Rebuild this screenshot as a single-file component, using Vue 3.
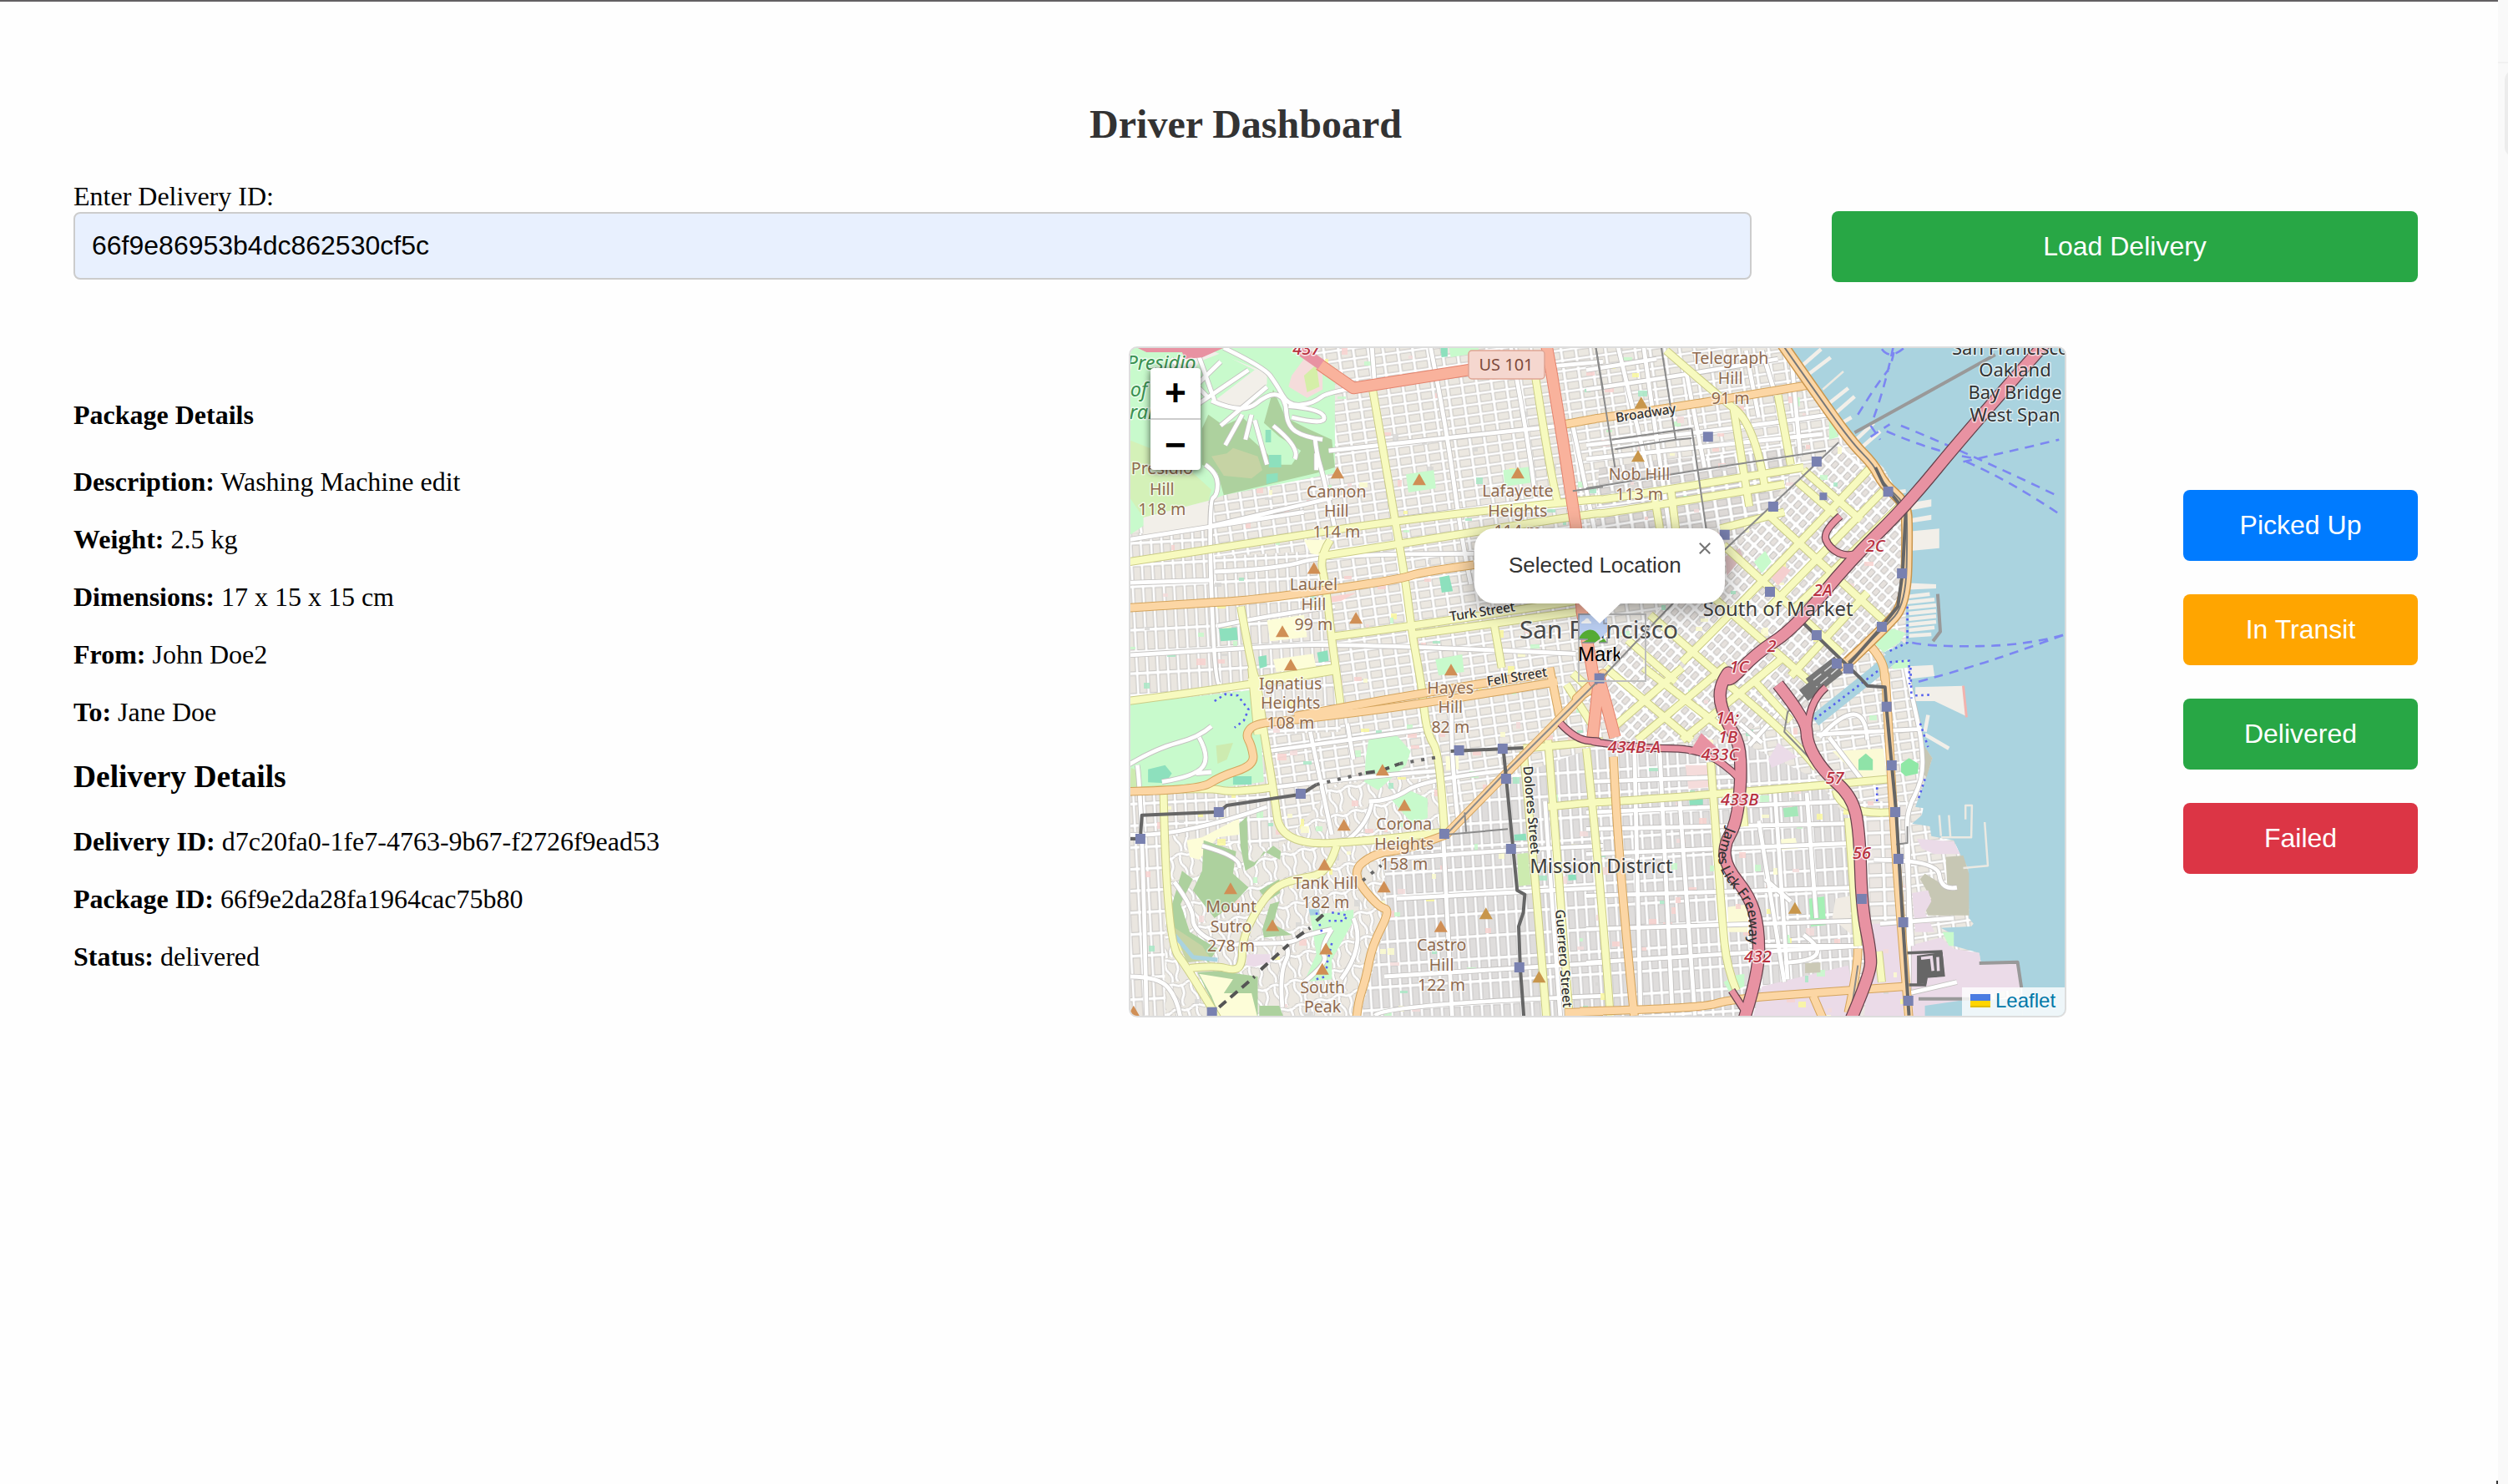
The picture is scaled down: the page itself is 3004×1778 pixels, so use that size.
<script setup>
import { ref } from 'vue'

const deliveryId = ref('66f9e86953b4dc862530cf5c')
const packageRows = [
  ['Description:', 'Washing Machine edit'],
  ['Weight:', '2.5 kg'],
  ['Dimensions:', '17 x 15 x 15 cm'],
  ['From:', 'John Doe2'],
  ['To:', 'Jane Doe']
]
const deliveryRows = [
  ['Delivery ID:', 'd7c20fa0-1fe7-4763-9b67-f2726f9ead53'],
  ['Package ID:', '66f9e2da28fa1964cac75b80'],
  ['Status:', 'delivered']
]
const actions = [
  ['Picked Up', 'blue'],
  ['In Transit', 'orange'],
  ['Delivered', 'green'],
  ['Failed', 'red']
]

// The map is digitised in four sheets (a b / c d); each has an origin and a scale.
const sheets = {
  a: [-14, -17, 2.7034, 3],
  b: [546, -17, 2.6133, 3],
  c: [-14, 383, 2.7034, 3],
  d: [546, 383, 2.6133, 3]
}
const at = (s, x, y) => {
  const [ox, oy, sx, sy] = sheets[s]
  return [+(ox + x / sx).toFixed(1), +(oy + y / sy).toFixed(1)]
}
// "a 10,20 30,40 b 5,5" -> svg path data; "/" begins a new line
const path = (text) => {
  let s = 'a'
  let cmd = 'M'
  return text.trim().split(/\s+/).map((t) => {
    if (sheets[t]) { s = t; return '' }
    if (t === '/') { cmd = 'M'; return '' }
    const [x, y] = t.split(',').map(Number)
    const out = cmd + at(s, x, y).join(' ')
    cmd = 'L'
    return out
  }).join('')
}
// Same input, with corners rounded through the midpoints
const curve = (text) => {
  let s = 'a'
  return text.split('/').map((part) => {
    const p = []
    part.trim().split(/\s+/).forEach((t) => {
      if (sheets[t]) s = t
      else p.push(at(s, ...t.split(',').map(Number)))
    })
    if (p.length < 3) return 'M' + p.map((q) => q.join(' ')).join('L')
    let d = `M${p[0].join(' ')}`
    for (let i = 1; i < p.length - 1; i++) {
      const e = i === p.length - 2 ? p[i + 1] : [(p[i][0] + p[i + 1][0]) / 2, (p[i][1] + p[i + 1][1]) / 2]
      d += `Q${p[i].join(' ')} ${e.join(' ')}`
    }
    return d
  }).join('')
}

const zones = [
  ['url(#gRich)', 'a 30,720 300,700 310,800 650,780 700,1250 c 720,230 480,240 500,430 520,650 150,700 150,1260 30,1260'],
  ['url(#gHill)', 'c 150,600 520,650 700,420 780,400 1040,400 1050,600 850,700 860,900 780,1260 150,1260'],
  ['url(#gMis)', 'c 1050,590 1250,400 1560,280 1568,1260 780,1260 870,900 860,700'],
  ['url(#gMis)', 'd -10,290 490,270 720,400 830,560 850,1250 -10,1260'],
  ['url(#gDog)', 'd 850,480 1000,480 1020,1250 850,1250'],
  ['url(#gSoma)', 'a 1480,1260 b 30,1260 60,1150 430,800 790,390 960,590 1005,700 990,970 780,1200 720,1260 d 720,60 700,200 620,180 400,260 100,260 -10,100 c 1500,60'],
  ['url(#gFin)', 'b 40,480 690,400 560,660 430,780 430,700 30,700'],
  ['#ebdbe8', 'd 550,1145 820,1070 850,1260 520,1260'],
  ['#ebdbe8', 'd 890,920 1000,920 1020,1260 870,1260'],
  ['#ebdbe8', 'd 600,270 660,320 580,360 570,330'],
  ['#fbfad6', 'd 770,300 930,290 940,395 860,400'],
  ['#fbfad6', 'd 443,860 505,850 505,950 445,950'],
  ['#f5dcdb', 'd 310,350 380,350 385,430 320,435']
]
const coast = 'b 632,40 700,170 760,270 830,360 870,420 930,480 960,540 1000,590 1015,680 1012,780 1005,900 1000,970 1000,1110 930,1145 960,1180 1010,1170 1015,1260 d 1010,0 1020,120 1045,200 1055,280 1083,325 1062,400 1030,500 1055,505 1050,530 1020,560 1075,570 1080,605 1150,620 1170,670 1195,720 1198,900 1212,920 1205,930 1110,935 1150,960 1150,1000 1230,1025 1235,1060 1350,1060 1365,1150 1365,1260 1520,1260 b 1520,40'
const areas = [
  ['#c8facc', 'a 30,50 560,50 700,120 700,500 340,580 290,600 80,690 40,720 30,720'],
  ['#add19e', 'a 290,290 340,330 400,300 460,360 500,200 540,300 610,340 690,380 700,480 640,500 340,580 320,500 270,470 270,340'],
  ['#c8facc', 'a 440,290 520,370 590,420 560,470 510,470 480,430 420,370'],
  ['#c6d3a4', 'a 300,440 350,430 370,410 450,440 465,490 430,520 340,510'],
  ['#d4f1b8', 'a 30,380 100,410 230,490 300,560 290,600 80,660 30,580'],
  ['#f5dcdb', 'a 560,150 600,90 660,130 660,200 610,230 550,190'],
  ['#d5efa8', 'a 600,150 640,110 650,190 610,210'],
  ['#f2efe9', 'a 170,90 300,60 480,140 480,180 400,280 300,230 200,240'],
  ['#c8facc', 'a 330,70 440,130 310,240 200,230 260,100'],
  ['#8de0bd', 'a 475,345 493,345 493,390 475,390'],
  ['#8de0bd', 'a 486,435 526,435 526,480 486,480'],
  ['#8de0bd', 'a 478,505 515,500 515,530 478,540'],
  ['#f2efe9', 'a 80,660 290,600 290,700 80,730'],
  ['#c8facc', 'a 930,505 1020,490 1027,555 938,570'],
  ['#c8facc', 'a 1245,490 1330,478 1337,535 1250,548'],
  ['#8de0bd', 'a 325,1060 382,1055 386,1100 330,1105'],
  ['#8de0bd', 'a 1038,875 1070,868 1082,925 1046,930'],
  ['#fdfdd8', 'a 480,1030 600,1010 610,1090 490,1105'],
  ['#fdfdd8', 'a 500,1170 630,1150 640,1200 510,1215'],
  ['#fdfdd8', 'a 600,740 685,740 650,795 622,790'],
  ['#8de0bd', 'a 452,1160 478,1155 480,1195 456,1203'],
  ['#8de0bd', 'a 642,1145 676,1138 680,1175 648,1182'],
  ['#c8facc', 'a 1025,1170 1112,1152 1118,1215 1036,1228'],
  ['#8de0bd', 'a 1042,50 1065,50 1065,82 1045,84'],
  ['#c8facc', 'a 1070,50 1165,50 1165,68 1075,84'],
  ['#f9d3d0', 'a 682,945 770,930 720,960 684,966'],
  ['#c8facc', 'c 30,130 435,80 460,240 470,410 340,430 50,445 30,440'],
  ['#cdebb0', 'c 315,280 370,270 350,330 320,345'],
  ['#cdebb0', 'c 40,360 60,370 60,430 36,430'],
  ['#8de0bd', 'c 95,365 150,350 172,380 150,415 95,412'],
  ['#8de0bd', 'c 370,390 430,390 430,420 370,420'],
  ['#c8facc', 'c 810,255 900,243 945,300 930,350 840,440 795,410 800,320'],
  ['#c8facc', 'c 880,470 930,435 1000,470 1000,540 950,560'],
  ['#fdfdd8', 'c 220,620 270,610 390,540 390,600 320,610 260,690 230,680'],
  ['#add19e', 'c 275,620 380,660 370,740 420,790 370,850 310,900 240,800 270,730'],
  ['#add19e', 'c 390,560 415,535 420,690 440,700 500,640 525,660 522,690 470,660 440,710 410,730 395,650'],
  ['#add19e', 'c 205,730 240,760 200,850 230,950 320,1010 290,1060 180,960 170,860'],
  ['#c6d3a4', 'c 175,930 270,1000 300,1050 220,1060'],
  ['#add19e', 'c 490,850 520,840 500,920 560,960 470,970 465,940'],
  ['#add19e', 'c 455,800 520,760 522,810 480,840'],
  ['#add19e', 'c 255,1095 320,1090 450,1110 450,1260 330,1260'],
  ['#fdfdd8', 'c 260,1100 370,1120 340,1170 430,1170 450,1260 330,1260 300,1180'],
  ['#add19e', 'c 455,1215 520,1215 535,1260 455,1260'],
  ['#c8facc', 'c 620,890 760,870 760,910 730,970 690,1050 690,1120 600,1130 640,1030'],
  ['#ebdbe8', 'c 415,1030 490,1030 490,1060 440,1075 415,1070'],
  ['#aad3df', 'c 615,868 650,868 650,888 620,890'],
  ['#fdfdd8', 'c 1058,318 1100,318 1102,365 1060,368'],
  ['#cdebb0', 'c 1290,670 1325,665 1335,780 1295,785'],
  ['#8de0bd', 'c 1280,600 1318,596 1320,620 1282,622'],
  ['#8de0bd', 'c 1455,745 1480,743 1482,763 1456,765'],
  ['#c8facc', 'b 525,820 560,780 580,820 550,860'],
  ['#f5cfcf', 'b 575,870 610,830 640,850 600,905'],
  ['#dcbfc0', 'b 435,800 480,770 490,800 440,870'],
  ['#c8facc', 'b 645,230 668,228 668,260 648,262'],
  ['#c8facc', 'b 760,300 790,370 760,380'],
  ['#c8facc', 'b 915,1090 960,1060 1000,1075 980,1110 930,1145 905,1115'],
  ['#c8facc', 'b 950,1180 1010,1170 1010,1200 960,1205'],
  ['#8fe3a8', 'd 852,330 875,308 897,330 897,368 852,368'],
  ['#8de0bd', 'd 322,475 365,470 365,498 324,502'],
  ['#a5e8b9', 'd 616,505 660,498 664,533 620,538'],
  ['#a5f0b5', 'd 697,830 745,822 750,925 703,930'],
  ['#fdfdd8', 'd 597,618 655,612 663,650 602,655'],
  ['#f1ece4', 'd 780,830 825,820 830,960 770,900'],
  ['#cbc9b6', 'd 685,1062 733,1060 733,1095 685,1098'],
  ['#c8facc', 'd 470,1105 495,1100 495,1145 450,1170 430,1130'],
  ['#c8facc', 'd 625,960 635,960 642,1020 620,1025'],
  ['#c7c7b4', 'd 1125,680 1180,675 1198,740 1198,890 1070,890 1055,850 1080,830 1045,760 1060,740 1130,790'],
  ['#c7c7b4', 'd 1057,280 1083,325 1065,395 1055,380'],
  ['#ebdbe8', 'd 1035,615 1150,625 1170,670 1090,670 1050,650'],
  ['#ebdbe8', 'd 1020,810 1070,800 1080,840 1060,880 1090,950 1030,950'],
  ['#ebdbe8', 'd 1010,1000 1110,970 1150,1010 1230,1025 1235,1060 1350,1060 1365,1150 1200,1190 1150,1260 1010,1260'],
  ['#aad3df', 'd 1060,1215 1180,1195 1365,1190 1365,1260 1060,1260'],
  ['#c8facc', 'd 1115,950 1150,950 1150,1000 1135,1000'],
  ['#8fe8a6', 'd 985,345 1010,325 1040,345 1038,380 1000,390 985,375']
]

// Small coloured lots scattered over the street grid
let seed = 11
const rnd = () => (seed = (seed * 16807) % 2147483647) / 2147483647
const lotColors = ['#f9d3d0', '#f9d3d0', '#f5dcdb', '#d9d8d6', '#fbf99f', '#fdfdd0', '#c8facc', '#a9e8c6']
const lots = Array.from({ length: 420 }, () => ({
  x: Math.round(rnd() * 930), y: Math.round(rnd() * 800),
  w: 4 + Math.round(rnd() * 7), h: 3 + Math.round(rnd() * 6),
  c: lotColors[Math.floor(rnd() * lotColors.length)]
}))

const white = [
  'a 340,50 470,120 510,180 550,260 630,250 680,205 1050,150 1568,100',
  'a 300,240 400,290 490,210 540,230 545,330 600,370 660,380 / 170,90 290,230 / 250,50 310,240',
  'a 200,240 330,100 / 260,250 420,130 / 330,330 480,190 / 400,290 345,400 / 430,290 410,380 / 440,310 480,470',
  'a 500,330 590,410 570,450 / 550,260 660,270 670,330 560,300 / 280,470 320,500 320,580 290,600 310,1250 c 325,60',
  'a 635,370 640,430 665,520 700,700 / 640,490 640,430',
  'a 820,50 830,200 / 1010,50 1060,330 1110,740 1140,900 / 1270,50 1330,400 1350,600',
  'a 680,420 1430,330 / 880,670 1400,590 / 300,690 690,590 / 30,740 600,640 / 310,855 520,845 680,790 1150,790',
  'a 30,895 300,885 / 320,1050 520,1005 700,980 / 30,1155 420,1130 700,1110 1480,1150 / 1470,330 1540,700',
  'b 0,200 300,150 600,90 / 0,400 480,340 760,290 / 100,50 190,480 / 180,50 260,700 / 310,120 370,480 / 0,450 740,360',
  'b 500,60 540,300 / 550,60 600,250 / 0,130 220,90 / 640,60 670,440 / 0,640 560,560',
  'c 30,350 120,290 260,250 300,210 / 60,350 75,450 90,1250 / 260,250 295,320 250,390 140,410 / 250,380 300,375',
  'c 480,300 1000,220 / 500,430 800,390 1040,370 / 620,230 690,600 / 740,200 760,330 / 1080,80 1070,280 1100,560',
  'c 30,600 200,610 480,500 / 820,480 810,560 740,620 / 810,480 880,480 990,400 1250,370 / 850,690 1300,650 1568,640',
  'c 180,770 240,860 240,940 330,1000 440,990 560,990 600,960 690,940 / 270,640 400,680 390,720 / 30,1110 130,1110 190,1190 200,1260',
  'c 530,990 560,1010 520,1100 530,1220 / 690,940 650,1010 680,1060 600,1130 / 760,900 800,1000 720,1120',
  'c 1050,590 1080,1260 / 1380,480 1430,1260 / 830,1250 860,1210 1560,1180 / 860,1110 1568,1060 / 900,830 1568,790',
  'd 0,520 400,500 820,480 / 0,410 500,390 / 0,670 850,630 / 0,820 850,790 / 0,1060 850,1000 / 0,940 830,910',
  'd 150,260 170,1250 / 230,300 270,1250 / 290,440 340,1250 / 0,580 820,560 / 590,440 630,1120 / 690,450 720,900',
  'd 680,960 790,1050 620,1060 / 510,1000 850,1000 / 540,550 620,1130 / 560,760 640,840',
  'd 1000,0 1025,130 1050,260 1055,400 1000,520 1010,640 1010,1250 / 720,240 1050,220 / 760,250 860,400 / 730,250 870,80 880,260',
  'd 480,200 550,270 / 510,280 620,140 / 590,130 680,200 / 1000,630 1020,1000 / 900,690 1100,690 1110,800 1160,790 / 920,920 1150,900 / 1010,1170 1160,1130'
]
const yellow = [
  'a 30,820 440,750 900,670 1568,590 b 40,600 680,480',
  'a 650,800 900,755 1568,640 b 30,650 470,570 620,540',
  'a 822,200 850,380 900,700 930,900 950,1080 980,1260 c 985,120 1000,240 1040,310 1055,600',
  'a 1350,160 1400,520 1420,600',
  'a 685,740 650,800 670,900 690,1100 710,1260 c 720,150',
  'a 395,980 430,1200 450,1260 c 470,240 500,430 525,640 850,620 1050,590',
  'a 680,1090 950,1050 1300,990 1480,960 / 960,1080 1480,1000',
  'a 420,1250 700,1200 / 1215,1040 1240,1200',
  'c 30,120 440,60 700,10',
  'c 430,0 450,240',
  'c 145,450 155,980 230,1090 320,1260',
  'c 30,445 290,430 370,450 500,430',
  'c 230,1080 310,1070 380,1090 400,1060 400,980 440,880 500,790 570,760 680,740 705,640',
  'c 1310,300 1345,700 1385,1260',
  'c 1390,260 1420,700 1460,1260',
  'c 1310,290 1568,265 / 1390,500 1568,480 d 30,485 400,455 770,420 950,400',
  'd 0,290 40,700 75,1250',
  'd 390,340 400,500 425,900 440,1080 470,1160',
  'd 780,440 800,530 950,520 / 820,540 850,1000',
  'd 490,500 495,570 / 915,1020 925,1130',
  'c 1450,60 1530,200 / 1470,20 1568,120',
  'b 250,60 400,210 530,330 560,560 / 460,260 490,480 510,620',
  'b 600,220 640,470 / 210,560 230,700 / 265,560 280,700 / 420,700 620,640',
  'b 660,530 780,650 / 680,490 860,670 / 560,640 930,1030 / 430,760 800,1150',
  'b 890,480 590,850 300,1180 / 950,540 560,1000 / 980,620 640,1000 / 880,930 640,1230',
  'b 330,880 700,1250 / 200,1010 450,1260 / 130,1100 280,1250',
  'd 300,260 620,-40 / 160,260 440,-10 / 80,220 300,0 / 400,20 640,240 720,360',
  'd 60,0 330,260 / 180,0 440,230 / 520,40 640,190'
]
const orange = [
  'a 30,985 300,965 400,960 650,925 920,880 980,855 1150,830',
  'a 1445,325 1568,300 b 0,310 270,265 480,225 690,185',
  'c 30,445 260,440 330,390 440,350 430,280 410,240 440,200 560,190 990,130 1420,50',
  'c 570,175 1000,85 1390,20',
  'c 1395,0 1430,190',
  'c 1060,600 930,655 830,665 750,735 840,860 880,870 820,1000 800,1120 775,1200 770,1260',
  'd 85,320 100,700 150,1250',
  'd -20,1235 360,1225 450,1190 820,1160 1000,1145',
  'c 1445,1240 1568,1235',
  'd 710,1180 740,1260 / 850,1010 850,1080 820,1240',
  'b 1000,600 1010,700 1000,980 910,1080 800,1190 740,1260',
  'b 880,1110 930,1170 935,1260 d 935,0 950,300 975,800 1010,1260'
]
const embarcadero = 'b 615,40 700,180 830,390 900,470 930,540 1000,610 1005,700 1000,970 930,1060 820,1180'
const market = 'b 40,1260 d -30,110 c 1568,20 1440,170 1060,600'
const trunk = 'a 650,110 760,195 1130,130 1385,90 / 1385,40 1400,130 1440,400 1480,690 1500,1000 1540,1250 c 1560,50 d 40,40 20,250 / d 40,40 60,120 90,250'
const motorway = [
  'b 1440,30 1200,340 1000,620 830,810 650,1060 530,1150 440,1260 d 450,0 410,90 440,200 480,270 485,400 470,560 430,640 440,720 510,820 540,930 540,1100 495,1260',
  'b 795,655 740,710 760,770 820,805 870,780',
  'c 1430,200 1480,260 1568,265 d 0,265 200,290 330,290 430,340 480,400',
  'd 600,60 690,190 690,270 740,370 830,460 855,580 862,860 890,1020 890,1100 830,1260',
  'd 750,70 690,130 695,240',
  'd 455,1160 500,1240'
]
const rails = [
  'b 680,1040 860,1240 d 880,65 935,70 940,150 970,520 990,900 1010,1250',
  'b 905,480 930,540 1000,640 990,860 975,980 920,1060 820,1190',
  'c 30,615 70,615 75,530 325,518 350,495 590,455 640,420',
  'c 1075,300 1310,288 / 1245,290 1255,400 1290,800 1315,815 1310,880 1295,930 1300,1080 1312,1260'
]
const thin = [
  'b 790,390 430,780 220,1030 30,1260',
  'b 0,555 350,490 750,420',
  'b 330,340 375,700 / 235,50 280,380 330,375 / 30,50 90,480 / 80,380 330,340 / 90,415 280,380',
  'c 1568,30 1240,390 1060,600 1260,580 / 1125,590 1120,520',
  'a 1545,50 1568,200 / 1470,565 1568,550',
  'd 720,350 620,230 630,160 690,90 / 850,1070 830,1230 / 1005,570 1005,630 970,635'
]
const bigPiers = [
  'd 1030,70 1180,65 1190,175 1090,120 1030,120',
  'b 1010,710 1105,700 1105,770 1015,780',
  'b 1010,1195 1085,1190 1090,1230 1015,1240',
  'b 1000,610 1080,595 1080,620 1010,635',
  'b 1005,665 1080,650 1080,668 1010,680',
  'b 1000,895 1095,900 1095,915 1000,920'
]
const piers = 'b 670,120 735,55 / 690,150 765,85 / 760,250 820,195 / 780,285 840,225 / 800,320 830,300 / 840,385 900,320 / 860,410 920,350 / 960,570 1000,565 / 1005,945 1075,935 / 1005,965 1090,955 / 1008,985 1095,975 / 1010,1005 1095,995 / 1010,1025 1095,1015 / 1010,1045 1095,1035 / 1010,1065 1090,1055 / 1010,1085 1080,1080 / d 1060,240 1135,290 / 1060,230 1070,170'
const jetties = 'd 1105,530 1110,605 / 1135,530 1140,610 / 1110,610 1205,610 1207,495 1187,495 1187,545 / 1247,555 1257,712 1180,720 / b 740,200 805,135'
const ferries = 'b 850,290 910,180 960,110 965,40 / 900,300 935,190 960,50 / 925,55 950,95 995,50 / 890,330 920,380 / 890,370 950,325 / 940,350 1100,430 1230,450 / 985,330 1180,420 1480,585 / 1190,460 1330,530 1490,655 / 1180,460 1300,430 1480,380 / 1020,1110 1080,1125 1380,1120 1500,1080 / 1040,1250 1200,1200 1380,1130 1500,1080'
const dots = 'd 1015,0 1018,110 / 1030,100 1085,97 / 1045,200 1070,285 / 1060,400 1040,470 / 910,430 910,480 / 715,185 920,5 / b 1005,980 1005,1110 940,1145 / 950,1180 1010,1175 1012,1260 / c 310,120 345,95 385,100 420,150 405,190 375,215 / 640,880 660,960 / 690,880 740,890 730,910 680,910 / 690,990 675,1060 670,1110 640,1120'
const dashRail = 'c 800,378 850,370 910,345 / 325,1220 440,1110 / 460,1085 550,995 / 575,970 620,935 / 640,910 670,880'
const dotRail = 'c 640,420 800,378 / 910,345 1040,320 / 790,765 850,710'

const stations = [
  ['b', 381, 370], ['b', 721, 459], ['b', 585, 621], ['b', 433, 722], ['b', 945, 567], ['b', 742, 584, 9],
  ['b', 575, 927], ['b', 988, 861], ['b', 925, 1053], ['b', 721, 1083], ['b', 784, 1185], ['b', 820, 1203],
  ['b', 41, 1238], ['d', 940, 140], ['d', 956, 351], ['d', 967, 519], ['d', 977, 687], ['d', 862, 831],
  ['d', 992, 915], ['d', 1008, 1197], ['c', 1102, 297], ['c', 1243, 291], ['c', 1254, 399], ['c', 1054, 597],
  ['c', 1270, 651], ['c', 1297, 1077], ['c', 589, 453], ['c', 324, 519], ['c', 70, 615], ['c', 302, 1238]
].map(([s, x, y, w = 12]) => ({ p: at(s, x, y), w }))
const peaks = [
  ['a', 708, 500], ['a', 973, 524], ['a', 1292, 500], ['a', 632, 843], ['a', 768, 1022], ['a', 530, 1070],
  ['a', 557, 1190], ['a', 1076, 1208], ['b', 172, 248, 1], ['b', 162, 440, 1], ['c', 854, 368], ['c', 925, 495],
  ['c', 729, 566], ['c', 666, 709], ['c', 859, 788], ['c', 362, 794], ['c', 498, 927], ['c', 671, 1011],
  ['c', 659, 1084], ['c', 1043, 931], ['c', 1189, 884, 1], ['c', 1361, 1112, 1], ['c', 48, 1237], ['d', 653, 865, 1]
].map(([s, x, y, t]) => ({ p: at(s, x, y), c: t ? '#c8964b' : '#d08f55' }))

const hill = (s, x, rows) => rows.map(([y, t]) => ({ p: at(s, x, y), t, k: 'hill' }))
const labels = [
  ...hill('a', 140, [[505, 'Presidio'], [578, 'Hill'], [650, '118 m']]),
  ...hill('a', 705, [[587, 'Cannon'], [658, 'Hill'], [731, '114 m']]),
  ...hill('a', 1292, [[586, 'Lafayette'], [657, 'Heights'], [728, '114 m']]),
  ...hill('a', 631, [[921, 'Laurel'], [992, 'Hill'], [1064, '99 m']]),
  ...hill('b', 451, [[108, 'Telegraph'], [180, 'Hill'], [251, '91 m']]),
  ...hill('b', 166, [[526, 'Nob Hill'], [598, '113 m']]),
  ...hill('c', 556, [[77, 'Ignatius'], [148, 'Heights'], [219, '108 m']]),
  ...hill('c', 1074, [[92, 'Hayes'], [163, 'Hill'], [235, '82 m']]),
  ...hill('c', 924, [[582, 'Corona'], [653, 'Heights'], [725, '158 m']]),
  ...hill('c', 670, [[794, 'Tank Hill'], [865, '182 m']]),
  ...hill('c', 364, [[878, 'Mount'], [950, 'Sutro'], [1021, '278 m']]),
  ...hill('c', 1045, [[1016, 'Castro'], [1088, 'Hill'], [1160, '122 m']]),
  ...hill('c', 660, [[1169, 'South'], [1240, 'Peak']]),
  ...[['a', 608, 74, '437'], ['b', 905, 784, '2C'], ['b', 740, 943, '2A'], ['b', 580, 1143, '2'], ['b', 478, 1218, '1C'],
    ['d', 442, 201, '1A;'], ['d', 443, 271, '1B'], ['d', 418, 333, '433C'], ['d', 150, 306, '434B-A'], ['d', 480, 494, '433B'],
    ['d', 778, 418, '57'], ['d', 862, 686, '56'], ['d', 537, 1058, '432']
  ].map(([s, x, y, t]) => ({ p: at(s, x, y), t, k: 'exit' })),
  ...[[75, 'San Francisco'], [153, 'Oakland'], [234, 'Bay Bridge'], [315, 'West Span']
  ].map(([y, t]) => ({ p: at('b', t === 'San Francisco' ? 1328 : 1342, y), t, k: 'bridge' })),
  { p: at('b', 600, 1013), t: 'South of Market', k: 'area' },
  { p: [564, 629], t: 'Mission District', k: 'area' },
  { p: [561, 347.5], t: 'San Francisco', k: 'city' },
  { p: at('a', 138, 130), t: 'Presidio', k: 'park' },
  { p: at('a', 65, 225), t: 'of', k: 'park' },
  { p: at('a', 72, 305), t: 'Grant', k: 'park' }
]
const streets = [
  ['a', 1074, 1033, -9, 'Turk Street', 79],
  ['c', 1194, 65, -9, 'Fell Street', 73],
  ['b', 94, 318, -9, 'Broadway', 73],
  ['c', 1310, 355, 85, 'Dolores Street', 106],
  ['c', 1414, 870, 85.5, 'Guerrero Street', 118]
].map(([s, x, y, r, t, len]) => ({ t, len, tf: `translate(${at(s, x, y).join(' ')}) rotate(${r})` }))
const freeway = curve('d 440,572 418,640 410,700 440,770 490,830 512,900 508,985')
const boats = curve(ferries)
const coastPath = path(coast)
</script>

<template>
  <div class="screen">
    <main class="page">
      <h1>Driver Dashboard</h1>

      <form class="lookup" @submit.prevent>
        <div class="field">
          <label for="delivery">Enter Delivery ID:</label>
          <input id="delivery" v-model="deliveryId" type="text">
        </div>
        <button class="btn green load" type="submit">Load Delivery</button>
      </form>

      <section class="content">
        <div class="details">
          <h4>Package Details</h4>
          <p v-for="[k, v] in packageRows" :key="k"><strong>{{ k }}</strong> {{ v }}</p>
          <h3>Delivery Details</h3>
          <p v-for="[k, v] in deliveryRows" :key="k"><strong>{{ k }}</strong> {{ v }}</p>
        </div>

        <div class="map">
          <svg class="tiles" viewBox="0 0 1119 800" width="1119" height="800">
            <defs>
              <pattern id="gBase" width="17.6" height="12.4" patternUnits="userSpaceOnUse" patternTransform="rotate(-8)">
                <rect width="17.6" height="12.4" fill="#fff" />
                <rect x="2" y="2" width="13.4" height="8.6" fill="#ece8e1" stroke="#c6c4c1" />
              </pattern>
              <pattern id="gRich" width="12.4" height="26" patternUnits="userSpaceOnUse" patternTransform="rotate(-3)">
                <rect width="12.4" height="26" fill="#fff" />
                <rect x="2" y="2" width="8.6" height="21.6" fill="#eae6e0" stroke="#c6c4c1" />
              </pattern>
              <pattern id="gHill" width="24" height="30" patternUnits="userSpaceOnUse" patternTransform="rotate(-14)">
                <rect width="24" height="30" fill="#ece8e1" />
                <path d="M0 4Q6 0 12 4T24 4M7 4Q3 12 8 18T7 34M7 -26V4M18 4Q22 14 17 20T18 34" fill="none" stroke="#c6c4c1" stroke-width="4.6" />
                <path d="M0 4Q6 0 12 4T24 4M7 4Q3 12 8 18T7 34M18 4Q22 14 17 20T18 34" fill="none" stroke="#fff" stroke-width="3" />
              </pattern>
              <pattern id="gMis" width="12" height="27" patternUnits="userSpaceOnUse" patternTransform="rotate(-3.5)">
                <rect width="12" height="27" fill="#fff" />
                <rect x="2" y="2" width="8" height="22.6" fill="#dfdddc" stroke="#c4c2c1" />
              </pattern>
              <pattern id="gDog" width="20" height="17" patternUnits="userSpaceOnUse" patternTransform="rotate(-2)">
                <rect width="20" height="17" fill="#fff" />
                <rect x="2" y="2" width="15.6" height="12.6" fill="#ebe6e2" stroke="#c6c4c1" />
              </pattern>
              <pattern id="gSoma" width="26" height="20" patternUnits="userSpaceOnUse" patternTransform="translate(4 6) rotate(-47)">
                <rect width="26" height="20" fill="#fff" />
                <path d="M3 2.500H11V8.500H3ZM3 12H11V18H3ZM15 2.500H24V8.500H15ZM15 12H24V18H15Z" fill="#e6e1dd" stroke="#c4c2c0" />
              </pattern>
              <pattern id="gFin" width="17" height="12" patternUnits="userSpaceOnUse" patternTransform="rotate(-9)">
                <rect width="17" height="12" fill="#fff" />
                <rect x="2" y="2" width="12" height="8" fill="#dedad7" stroke="#b9b7b5" />
              </pattern>
            </defs>

            <rect width="1119" height="800" fill="url(#gBase)" />
            <path v-for="([f, d], i) in zones" :key="'z' + i" :d="path(d) + 'Z'" :fill="f" />
            <g opacity=".85">
              <rect v-for="(l, i) in lots" :key="'l' + i" :x="l.x" :y="l.y" :width="l.w" :height="l.h" :fill="l.c" />
            </g>
            <path :d="coastPath + 'Z'" fill="#aad3df" />
            <path v-for="([f, d], i) in areas" :key="'a' + i" :d="path(d) + 'Z'" :fill="f" />
            <path :d="path('b 1000,1120 d 900,20 715,190')" class="line" stroke="#aad3df" stroke-width="15" />
            <path :d="path('c 180,960 240,1040 320,1050')" class="line" stroke="#aad3df" stroke-width="5" />
            <path v-for="(d, i) in bigPiers" :key="'bp' + i" :d="path(d) + 'Z'" fill="#f2efe9" />
            <path :d="path(piers)" class="line" stroke="#f2efe9" stroke-width="4.500" />
            <path :d="path(jetties)" class="line" stroke="#ebe9e2" stroke-width="2.500" />
            <path :d="path('d 1180,65 1190,178')" class="line" stroke="#f2b3ae" stroke-width="3" />
            <path :d="path('b 1100,935 1108,1070 1085,1105 / d 1230,1062 1350,1058 1362,1150 / 1040,1190 1200,1190')" class="line" stroke="#999" stroke-width="4" />

            <path v-for="(d, i) in white" :key="'wc' + i" :d="curve(d)" class="line" stroke="#c3c1bf" stroke-width="6.500" />
            <path v-for="(d, i) in white" :key="'w' + i" :d="curve(d)" class="line" stroke="#fff" stroke-width="4.800" />
            <path v-for="(d, i) in yellow" :key="'yc' + i" :d="curve(d)" class="line" stroke="#cbcc86" stroke-width="10" />
            <path v-for="(d, i) in yellow" :key="'y' + i" :d="curve(d)" class="line" stroke="#f7fabf" stroke-width="8" />
            <path v-for="(d, i) in orange" :key="'oc' + i" :d="curve(d)" class="line" stroke="#d4a45c" stroke-width="10.600" />
            <path v-for="(d, i) in orange" :key="'o' + i" :d="curve(d)" class="line" stroke="#fcd6a4" stroke-width="8.600" />
            <path :d="curve(embarcadero)" class="line" stroke="#c9954c" stroke-width="14" />
            <path :d="curve(embarcadero)" class="line" stroke="#fcd6a4" stroke-width="11" />
            <path :d="path(market)" class="line" stroke="#d4a45c" stroke-width="11" />
            <path :d="path(market)" class="line" stroke="#fcd6a4" stroke-width="9" />
            <path :d="path(trunk)" class="line" stroke="#e4836d" stroke-width="14.500" />
            <path :d="path(trunk)" class="line" stroke="#f9b29c" stroke-width="12.500" />

            <path v-for="(d, i) in thin" :key="'t' + i" :d="path(d)" class="line" stroke="#8a8a8a" stroke-width="2" />
            <path :d="curve(embarcadero)" class="line" stroke="#777" stroke-width="2" />
            <path :d="path('b 1280,75 1100,190 840,355')" class="line" stroke="#999" stroke-width="4" />
            <path :d="boats" fill="none" stroke="#7c86f2" stroke-width="2.600" stroke-dasharray="11 8" />
            <path :d="path(dots)" fill="none" stroke="#5560ee" stroke-width="2.600" stroke-dasharray="2.600 4.500" />
            <path v-for="(d, i) in rails" :key="'r' + i" :d="path(d)" class="line" stroke="#666" stroke-width="4" />
            <path :d="path(dashRail)" fill="none" stroke="#555" stroke-width="4" stroke-dasharray="11 7" />
            <path :d="path(dotRail)" fill="none" stroke="#666" stroke-width="4" stroke-dasharray="4 9" />
            <path :d="path('b 790,1180 700,1260 / d 790,0 680,100')" fill="none" stroke="#777" stroke-width="17" />
            <path :d="path('b 770,1190 705,1250 / b 790,1200 720,1270')" fill="none" stroke="#ddd" stroke-width="1.500" stroke-dasharray="12 5" />
            <path :d="path('d 1005,1025 1110,1020 1118,1105 1065,1110 1060,1140 1010,1140')" fill="none" stroke="#666" stroke-width="3.500" />
            <path :d="path('d 1035,1035 1115,1022 1120,1100 1095,1112 1065,1108 1065,1135 1035,1138') + 'Z'" fill="#666" />
            <path :d="path('d 1048,1045 1080,1040 1085,1090 / 1100,1040 1102,1090')" fill="none" stroke="#ebdbe8" stroke-width="3.500" />

            <path v-for="(d, i) in motorway" :key="'mc' + i" :d="curve(d)" class="line" stroke="#66434d" :stroke-width="i === 0 || i === 3 ? 15.500 : 9.500" />
            <path v-for="(d, i) in motorway" :key="'m' + i" :d="curve(d)" class="line" stroke="#e892a2" :stroke-width="i === 0 || i === 3 ? 13 : 7" />
            <path :d="path('a 60,50 340,50 270,85 215,90 205,66 90,66') + 'Z'" fill="#e892a2" />
            <path :d="path('a 590,60 655,110')" class="line" stroke="#e892a2" stroke-width="13" />
            <path :d="path('d 360,235 420,300 320,310') + 'Z'" fill="#e892a2" />

            <rect v-for="(s, i) in stations" :key="'s' + i" :x="s.p[0] - s.w / 2" :y="s.p[1] - s.w / 2" :width="s.w" :height="s.w" fill="#7981b0" />
            <path v-for="(k, i) in peaks" :key="'p' + i" :d="`M${k.p[0]} ${k.p[1] - 7.500}l8 14h-16z`" :fill="k.c" />

            <rect x="405" y="3" width="91" height="34" rx="4" fill="#f5d7cf" stroke="#dfa594" stroke-width="1.500" />
            <text x="450" y="27" class="shield">US 101</text>
            <text v-for="(l, i) in labels" :key="'t' + i" :x="l.p[0]" :y="l.p[1]" :class="['label', l.k]">{{ l.t }}</text>
            <text v-for="s in streets" :key="s.t" :transform="s.tf" :textLength="s.len" class="street">{{ s.t }}</text>
            <path id="fwy" :d="freeway" fill="none" />
            <text class="street fwy"><textPath href="#fwy">James Lick Freeway</textPath></text>
          </svg>

          <div class="marker">
            <svg class="broken" viewBox="0 0 36 36" width="36" height="36">
              <path d="M1 1H30L35 6V22L26 31H1Z" fill="#b9cdf0" />
              <path d="M4 12c0-3 3-3 4-4 2-4 6-2 6 1 2 0 2 2 2 3z" fill="#f3f3f3" />
              <path d="M1 30C7 17 21 15 27 30L20 35H5L12 31Z" fill="#55ab34" />
              <path d="M25 34L31 30 35 35H25Z" fill="#55ab34" />
              <path d="M1 31V1H30M1 31H12M5 35H20M25 35H35V28M31 2V12H35" fill="none" stroke="#8c8f99" stroke-width="1.300" />
            </svg>
            <span>Mark</span>
          </div>

          <div class="popup">
            <span>Selected Location</span>
            <svg class="close" viewBox="0 0 14 14" width="14" height="14"><path d="M.8.800 13.200 13.200M13.200.800.800 13.200" stroke="#757575" stroke-width="2.100" /></svg>
            <svg class="tip" viewBox="0 0 52 26" width="52" height="26"><path d="M0 0H52L26 25Z" fill="#fff" /></svg>
          </div>

          <div class="zoom">
            <b>+</b>
            <b>−</b>
          </div>
          <div class="credit">
            <svg viewBox="0 0 24 16" width="24" height="16"><path fill="#4c7be1" d="M0 0H24V8H0Z" /><path fill="#ffd500" d="M0 8H24V14H0Z" /><path fill="#e0bc00" d="M0 14H24V16H0Z" /></svg>
            <span>Leaflet</span>
          </div>
        </div>

        <div class="actions">
          <button v-for="[t, c] in actions" :key="t" :class="['btn', c]" type="button">{{ t }}</button>
        </div>
      </section>
      <i class="corner"></i>
    </main>
    <aside class="edge"><i></i></aside>
  </div>
</template>

<style>
body { background: #fefefe; overflow: hidden; }
</style>

<style scoped>
.screen { display: flex; width: 3004px; height: 1778px; overflow: hidden; font-family: "Liberation Serif", serif; font-size: 32px; color: #000; }
.page { position: relative; box-sizing: border-box; width: 2992px; border-top: 2px solid #636063; padding: 119px 96px 0 88px; background: #fefefe; }
.edge { width: 12px; background: #f9f9f9; overflow: hidden; }
.edge::before { content: ""; display: block; height: 74px; border-bottom: 2px solid #f1f1f1; }
.edge i { display: block; width: 40px; height: 102px; margin: 9px 0 0 8px; border-radius: 10px; background: #ececec; }
.corner { position: absolute; right: 0; bottom: 0; width: 2px; height: 4px; background: #333; }
h1 { margin: 0 0 41px; font-size: 48px; line-height: 55px; text-align: center; color: #333; }

.lookup { display: flex; justify-content: space-between; height: 121px; }
.field { width: 2010px; }
label { display: block; line-height: 37px; }
input { display: block; box-sizing: border-box; width: 100%; height: 81px; padding: 20px; border: 2px solid #ccc; border-radius: 8px; background: #e8f0fe; font: 32px "Liberation Sans", sans-serif; color: #000; outline: 0; }
.btn { display: block; width: 281px; height: 85px; padding: 0; border: 0; border-radius: 8px; color: #fff; font: 32px "Liberation Sans", sans-serif; }
.load { width: 702px; margin-top: 36px; }
.green { background: #28a745; }
.blue { background: #007bff; }
.orange { background: #ffa500; }
.red { background: #dc3545; }

.content { display: flex; align-items: center; height: 804px; margin-top: 77px; }
.details { width: 1264px; }
.details h4 { margin: 41.5px 0 43.5px; font-size: 32px; }
.details p { margin: 32px 0; }
.details h3 { margin: 36.5px 0 38.400px; font-size: 37.44px; }
.actions { display: flex; flex-direction: column; gap: 40px; margin-left: 140px; }

.map { position: relative; box-sizing: border-box; width: 1123px; height: 804px; border: 2px solid #ddd; border-radius: 10px; overflow: hidden; background: #ddd; font-family: "Liberation Sans", sans-serif; }
.tiles { display: block; }
.line { fill: none; stroke-linejoin: round; stroke-linecap: butt; }
.label, .street, .shield { font-family: "Noto Sans", sans-serif; paint-order: stroke; stroke: rgba(255, 255, 255, .62); stroke-width: 3px; stroke-linejoin: round; text-anchor: middle; }
.hill { font-size: 19.6px; fill: #8f6a4e; }
.exit { font-size: 20px; font-style: italic; font-weight: 500; fill: #b8303e; stroke: rgba(255, 255, 255, .75); }
.bridge { font-size: 22px; fill: #333; }
.area { font-size: 23.8px; fill: #3c3c3c; }
.city { font-size: 29.8px; fill: #4a4a4a; }
.park { font-size: 23.5px; font-style: italic; fill: #3a9150; }
.shield { font-size: 20px; fill: #7d4a3c; stroke: none; }
.street { font-size: 15.8px; font-weight: 500; fill: #333; text-anchor: start; }
.fwy { font-size: 16.5px; stroke: none; }

.zoom { position: absolute; left: 24px; top: 24px; width: 60px; border-radius: 4px; background: #fff; box-shadow: 0 2px 10px rgba(0, 0, 0, .65); }
.zoom b { display: block; box-sizing: border-box; height: 60px; padding-top: 3px; font: bold 44px/60px "Liberation Mono", monospace; text-align: center; color: #000; }
.zoom b:first-child { height: 62px; border-bottom: 2px solid #ccc; }

.marker { position: absolute; left: 536px; top: 318px; box-sizing: border-box; width: 82px; height: 82px; border: 2px solid #bdbdbd; }
.broken { position: absolute; left: -2px; top: -2px; }
.marker span { position: absolute; left: -2px; top: 32px; width: 50px; overflow: hidden; font-size: 24px; line-height: 30px; color: #000; }
.popup { position: absolute; left: 412px; top: 216px; box-sizing: border-box; width: 300px; height: 90px; padding-left: 41px; border-radius: 24px; background: #fff; box-shadow: 0 6px 28px rgba(0, 0, 0, .4); font-size: 26px; line-height: 88px; color: #333; white-space: nowrap; }
.close { position: absolute; right: 17px; top: 17px; }
.tip { position: absolute; left: 124px; top: 89px; }
.credit { position: absolute; right: 0; bottom: 0; display: flex; align-items: center; gap: 6px; box-sizing: border-box; width: 123px; height: 34px; padding-left: 10px; background: rgba(255, 255, 255, .8); color: #0078a8; font-size: 24px; line-height: 30px; }
.credit svg { margin-top: -2px; }
.credit span { margin-top: -2px; }
</style>
